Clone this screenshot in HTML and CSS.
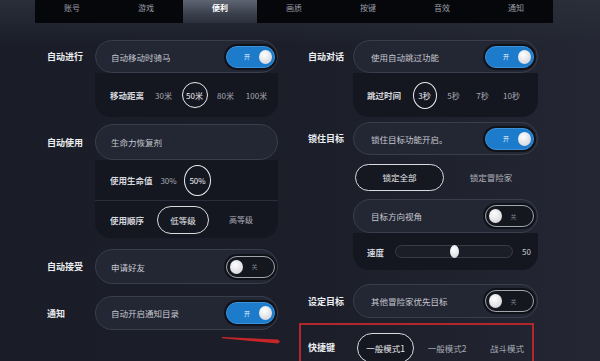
FILE: index.html
```html
<!DOCTYPE html>
<html lang="zh-CN">
  <head>
    <meta charset="utf-8">
    <title>设置 - 便利</title>
    <link rel="stylesheet" href="styles.css">
  </head>
  <body>
    <nav class="tabs">
      <span class="tab">账号</span>
      <span class="tab">游戏</span>
      <span class="tab active">便利</span>
      <span class="tab">画质</span>
      <span class="tab">按键</span>
      <span class="tab">音效</span>
      <span class="tab">通知</span>
    </nav>

    <div class="settings">
      <!-- 左列 -->
      <div class="col col-left">
        <div class="setting mt16">
          <div class="head">
            <span class="label">自动进行</span>
            <div class="bar h33"><span>自动移动时骑马</span><span class="toggle on"><i>开</i><b></b></span></div>
          </div>
          <div class="sub">
            <div class="sub-row h44">
              <span class="sub-label w38">移动距离</span>
              <span class="opt w31"><span class="pick">30米</span></span>
              <span class="opt w31"><span class="pick sel">50米</span></span>
              <span class="opt w31"><span class="pick">80米</span></span>
              <span class="opt w31"><span class="pick">100米</span></span>
            </div>
          </div>
        </div>

        <div class="setting mt7">
          <div class="head">
            <span class="label">自动使用</span>
            <div class="bar h36"><span>生命力恢复剂</span></div>
          </div>
          <div class="sub">
            <div class="sub-row h40 divided">
              <span class="sub-label w45">使用生命值</span>
              <span class="opt w27"><span class="pick">30%</span></span>
              <span class="opt w31"><span class="pick sel tall">50%</span></span>
            </div>
            <div class="sub-row h37">
              <span class="sub-label w37">使用顺序</span>
              <span class="chip w52">低等级</span>
              <span class="opt w60">高等级</span>
            </div>
          </div>
        </div>

        <div class="setting mt11">
          <div class="head">
            <span class="label">自动接受</span>
            <div class="bar h35"><span>申请好友</span><span class="toggle"><b></b><i>关</i></span></div>
          </div>
        </div>

        <div class="setting mt12">
          <div class="head">
            <span class="label">通知</span>
            <div class="bar h34"><span>自动开启通知目录</span><span class="toggle on"><i>开</i><b></b></span></div>
          </div>
        </div>
      </div>

      <!-- 右列 -->
      <div class="col col-right">
        <div class="setting mt16">
          <div class="head">
            <span class="label">自动对话</span>
            <div class="bar h33"><span>使用自动跳过功能</span><span class="toggle on"><i>开</i><b></b></span></div>
          </div>
          <div class="sub">
            <div class="sub-row h44">
              <span class="sub-label w43">跳过时间</span>
              <span class="opt w29"><span class="pick sel narrow">3秒</span></span>
              <span class="opt w29"><span class="pick">5秒</span></span>
              <span class="opt w29"><span class="pick">7秒</span></span>
              <span class="opt w29"><span class="pick">10秒</span></span>
            </div>
          </div>
        </div>

        <div class="setting mt5">
          <div class="head">
            <span class="label">锁住目标</span>
            <div class="bar h33"><span>锁住目标功能开启。</span><span class="toggle on"><i>开</i><b></b></span></div>
          </div>
          <div class="choice">
            <span class="chip wide">锁定全部</span>
            <span class="choice-text">锁定冒险家</span>
          </div>
          <div class="head">
            <span class="label"></span>
            <div class="bar h34"><span>目标方向视角</span><span class="toggle"><b></b><i>关</i></span></div>
          </div>
          <div class="sub">
            <div class="sub-row h37">
              <span class="sub-label w28">速度</span>
              <span class="slider"><b style="left: 50%"></b></span>
              <span class="slider-val">50</span>
            </div>
          </div>
        </div>

        <div class="setting mt14">
          <div class="head">
            <span class="label">设定目标</span>
            <div class="bar h34"><span>其他冒险家优先目标</span><span class="toggle"><b></b><i>关</i></span></div>
          </div>
        </div>

        <div class="hotkey">
          <span class="label">快捷键</span>
          <span class="chip mode">一般模式1</span>
          <span class="opt w66">一般模式2</span>
          <span class="opt w54">战斗模式</span>
        </div>
      </div>
    </div>

    <svg class="arrow" width="64" height="12" viewBox="0 0 64 12">
      <polygon points="2,3 58,5.5 60,7.5 58,9.5 2,4.2" fill="#c8252b"/>
    </svg>
  </body>
</html>
```

FILE: styles.css
```css
body {
  margin: 0;
  height: 361px;
  overflow: hidden;
  position: relative;
  font-family: "Noto Sans CJK SC", "Noto Sans", sans-serif;
  color: #c9cbd2;
  background:
    linear-gradient(180deg, #2a2e38 0, rgba(42,46,56,0) 45px),
    linear-gradient(90deg, #1a1d27 0%, #1c1f2a 55%, #242733 100%);
}
.tabs {
  display: flex;
  height: 23px;
  padding-left: 35px;
}
.tab {
  width: 74px;
  background-color: #06070a;
  color: #9a9ea7;
  font-size: 8px;
  line-height: 15px;
  text-align: center;
}
.tab.active {
  background: linear-gradient(180deg, #5e6572 0%, #3a404c 60%, #2b303b 100%);
  color: #fff;
  font-weight: bold;
}

.settings {
  display: flex;
  gap: 30px;
  padding-left: 47px;
  padding-top: 1px;
}
.col-left {
  width: 231px;
}
.col-right {
  width: 230px;
}
.mt16 { margin-top: 16px; }
.mt14 { margin-top: 14px; }
.mt12 { margin-top: 12px; }
.mt11 { margin-top: 11px; }
.mt7 { margin-top: 7px; }
.mt5 { margin-top: 5px; }

.head {
  display: flex;
  align-items: center;
}
.label {
  flex: none;
  width: 48px;
  font-size: 9px;
  font-weight: bold;
  color: #eceef2;
  white-space: nowrap;
}
.col-right .label {
  width: 45px;
}
.bar {
  flex: 1;
  box-sizing: border-box;
  display: flex;
  align-items: center;
  justify-content: space-between;
  padding: 0 2px 0 15px;
  border: 1.5px solid #3a3e4c;
  border-radius: 18px;
  background-color: #232633;
  font-size: 8.5px;
  color: #c6c9d0;
}
.col-right .bar {
  padding-left: 17px;
  padding-right: 3px;
}
.h33 { height: 33px; }
.h34 { height: 34px; }
.h35 { height: 35px; }
.h36 { height: 36px; }
.h37 { height: 37px; }
.h40 { height: 40px; }
.h44 { height: 44px; }

.toggle {
  box-sizing: border-box;
  width: 49px;
  height: 22px;
  display: flex;
  align-items: center;
  justify-content: space-between;
  padding: 0 3px 0 8px;
  border: 1.5px solid #a2a5ad;
  border-radius: 11px;
  background-color: #15171f;
  box-shadow: 0 0 0 2px #10121a;
}
.toggle i {
  font-style: normal;
  font-size: 6px;
  color: #7c8089;
  flex: 1;
  text-align: center;
}
.toggle b {
  width: 13px;
  height: 14px;
  border-radius: 50%;
  background: radial-gradient(circle at 40% 35%, #ffffff, #c9ccd2);
}
.toggle.on {
  padding: 0 2px 0 8px;
  border-color: #3d8fd8;
  background-color: #1c7bcb;
}
.toggle.on i {
  color: #e8f2ff;
}
.toggle:not(.on) {
  padding: 0 8px 0 3px;
}

.sub {
  margin-left: 48px;
  background-color: #141620;
  border-radius: 0 0 16px 16px;
}
.col-right .sub {
  margin-left: 45px;
}
.sub-row {
  display: flex;
  align-items: center;
  padding-left: 15px;
  font-size: 8px;
  color: #a9acb4;
}
.col-right .sub-row {
  padding-left: 14px;
}
.divided {
  border-bottom: 1px solid #2b2e3a;
}
.sub-label {
  flex: none;
  font-size: 8.5px;
  font-weight: bold;
  color: #d6d8de;
  white-space: nowrap;
}
.w28 { width: 28px; }
.w37 { width: 37px; }
.w38 { width: 38px; }
.w43 { width: 43px; }
.w45 { width: 45px; }
.w27 { width: 27px; }
.w29 { width: 29px; }
.w31 { width: 31px; }
.w52 { width: 52px; }
.w54 { width: 54px; }
.w60 { width: 60px; }
.w66 { width: 66px; }

.opt {
  flex: none;
  display: flex;
  justify-content: center;
  align-items: center;
  font-size: 8px;
  color: #a9acb4;
  white-space: nowrap;
}
.pick {
  display: flex;
  justify-content: center;
  align-items: center;
  width: 26px;
  height: 26px;
  border-radius: 50%;
  box-sizing: border-box;
  white-space: nowrap;
}
.pick.sel {
  border: 1.5px solid #e9ebef;
  color: #eef0f4;
}
.pick.tall {
  width: 27px;
  height: 31px;
}
.pick.narrow {
  width: 24px;
  height: 27px;
}

.chip {
  flex: none;
  box-sizing: border-box;
  display: flex;
  justify-content: center;
  align-items: center;
  height: 28px;
  border: 1.5px solid #d9dbe0;
  border-radius: 14px;
  background-color: #161821;
  font-size: 8.5px;
  color: #e6e8ec;
}
.chip.w52 {
  margin-left: 10px;
  margin-right: 2px;
}
.choice {
  display: flex;
  align-items: center;
  height: 44px;
  margin-left: 47px;
}
.chip.wide {
  width: 89px;
  height: 27px;
}
.choice-text {
  flex: 1;
  text-align: center;
  font-size: 8.5px;
  color: #b2b5bc;
}

.slider {
  position: relative;
  flex: none;
  width: 118px;
  height: 13px;
  box-sizing: border-box;
  border: 1px solid #393c48;
  border-radius: 7px;
  background-color: #1b1d27;
}
.slider b {
  position: absolute;
  top: -1px;
  width: 9px;
  height: 13px;
  margin-left: -4px;
  border-radius: 50%;
  background: radial-gradient(circle at 40% 35%, #ffffff, #cfd2d8);
}
.slider-val {
  margin-left: 9px;
  font-size: 8px;
  color: #c9cbd2;
}

.hotkey {
  display: flex;
  align-items: flex-start;
  height: 50px;
  margin: 5px 4px 0 -9px;
  padding: 8px 0 0 7px;
  border: 2px solid #b3262b;
  border-bottom: none;
  box-sizing: border-box;
}
.hotkey .label {
  line-height: 30px;
}
.chip.mode {
  width: 57px;
  height: 30px;
  margin-left: 4px;
  border-radius: 15px;
}
.hotkey .opt {
  height: 30px;
  font-size: 8.5px;
}

.arrow {
  position: absolute;
  left: 220px;
  top: 334px;
}
```
